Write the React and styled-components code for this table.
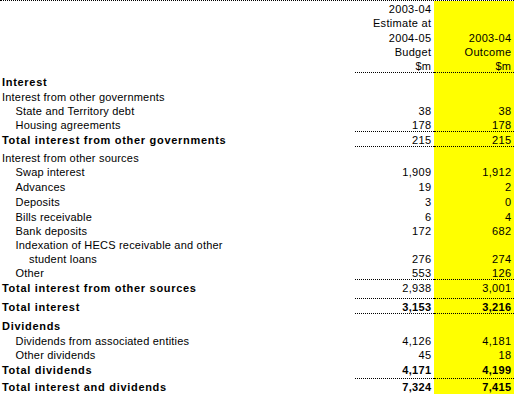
import React from 'react';
import styled, { createGlobalStyle } from 'styled-components';

const GlobalStyle = createGlobalStyle`
  body {
    margin: 0;
    background: #fff;
  }
`;

// h: row height, pb: extra bottom padding, bt/bb: dotted borders on the figure cells
const rows = [
  { a: '2003-04', h: 14.6 },
  { a: 'Estimate at', h: 14.6 },
  { a: '2004-05', b: '2003-04', h: 14.6 },
  { a: 'Budget', b: 'Outcome', h: 14.6 },
  { a: '$m', b: '$m', h: 13.6, bb: true },
  { label: 'Interest', bold: true, h: 16.3 },
  { label: 'Interest from other governments', h: 15 },
  { label: 'State and Territory debt', indent: 1, a: '38', b: '38', h: 14 },
  { label: 'Housing agreements', indent: 1, a: '178', b: '178', h: 13.7, bb: true },
  { label: 'Total interest from other governments', bold: true, a: '215', b: '215', h: 15, bb: true },
  { label: 'Interest from other sources', h: 18.3 },
  { label: 'Swap interest', indent: 1, a: '1,909', b: '1,912', h: 14 },
  { label: 'Advances', indent: 1, a: '19', b: '2', h: 15 },
  { label: 'Deposits', indent: 1, a: '3', b: '0', h: 15 },
  { label: 'Bills receivable', indent: 1, a: '6', b: '4', h: 14.5 },
  { label: 'Bank deposits', indent: 1, a: '172', b: '682', h: 14.5 },
  { label: 'Indexation of HECS receivable and other', indent: 1, h: 14 },
  { label: 'student loans', indent: 2, a: '276', b: '274', h: 14 },
  { label: 'Other', indent: 1, a: '553', b: '126', h: 13.7, bb: true },
  { label: 'Total interest from other sources', bold: true, a: '2,938', b: '3,001', h: 18, pb: 2.7 },
  { label: 'Total interest', bold: true, figBold: true, a: '3,153', b: '3,216', h: 16, bt: true, bb: true },
  { label: 'Dividends', bold: true, h: 19.3 },
  { label: 'Dividends from associated entities', indent: 1, a: '4,126', b: '4,181', h: 15 },
  { label: 'Other dividends', indent: 1, a: '45', b: '18', h: 14 },
  { label: 'Total dividends', bold: true, figBold: true, a: '4,171', b: '4,199', h: 15.7, pb: 0.7 },
  { label: 'Total interest and dividends', bold: true, figBold: true, a: '7,324', b: '7,415', h: 16, bt: true, full: true },
];

export default function App() {
  return (
    <>
      <GlobalStyle />
      <Sheet>
        {rows.map((r, i) => (
          <Row key={i} $h={r.h} $full={r.full}>
            <Label $indent={r.indent || 0} $bold={r.bold} $pb={r.pb}>
              {r.label}
            </Label>
            <Figure $bold={r.figBold} $pb={r.pb} $bt={r.bt} $bb={r.bb}>
              {r.a}
            </Figure>
            <Outcome $bold={r.figBold} $pb={r.pb} $bt={r.bt} $bb={r.bb}>
              {r.b}
            </Outcome>
          </Row>
        ))}
      </Sheet>
    </>
  );
}

const Sheet = styled.div`
  width: 514px;
  border-top: 1px dotted #000;
  font-family: 'Liberation Sans', Arial, sans-serif;
  font-size: 11px;
  line-height: 12px;
  color: #000;
`;

const Row = styled.div`
  display: grid;
  grid-template-columns: 355px 79px 80px;
  height: ${(p) => p.$h}px;
  border-bottom: ${(p) => (p.$full ? '1px dotted #000' : 'none')};
  margin-bottom: ${(p) => (p.$full ? '-1px' : '0')};
`;

const Cell = styled.div`
  box-sizing: border-box;
  display: flex;
  align-items: flex-end;
  white-space: nowrap;
  padding-bottom: ${(p) => p.$pb || 0}px;
  border-bottom: 1px ${(p) => (p.$bb ? 'dotted #000' : 'solid transparent')};
  border-top: ${(p) => (p.$bt ? '1px dotted #000' : 'none')};
  font-weight: ${(p) => (p.$bold ? 700 : 400)};
`;

const Label = styled(Cell)`
  padding-left: ${(p) => 2 + p.$indent * 13.5}px;
  letter-spacing: ${(p) => (p.$bold ? '0.7px' : '0.2px')};
`;

const Figure = styled(Cell)`
  justify-content: flex-end;
  padding-right: 2.7px;
  letter-spacing: 0.3px;
`;

const Outcome = styled(Figure)`
  background: #ffff00;
`;
